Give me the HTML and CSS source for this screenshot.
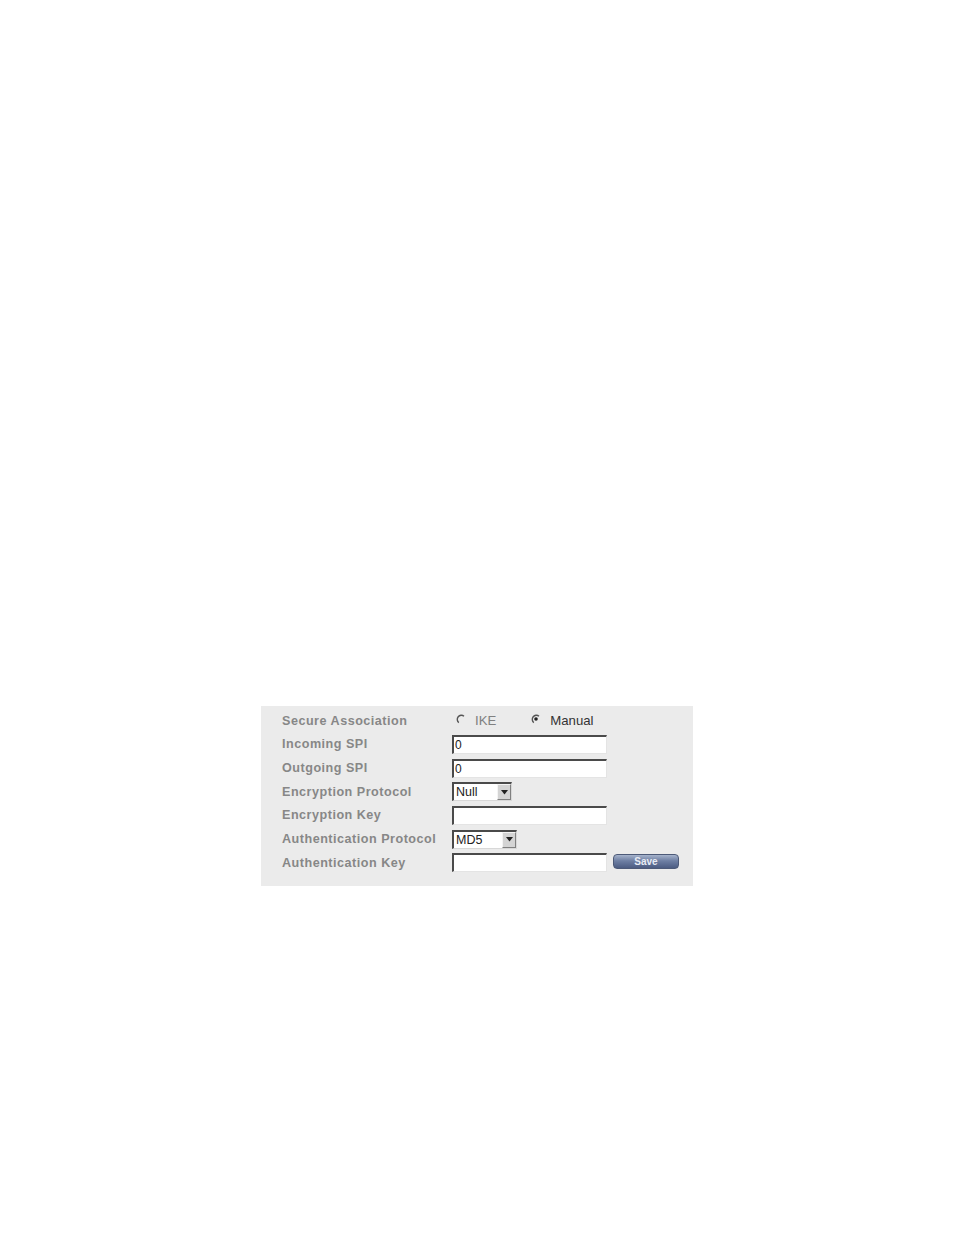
FILE: index.html
```html
<!DOCTYPE html>
<html>
<head>
<meta charset="utf-8">
<link rel="stylesheet" href="styles.css">
</head>
<body>
<div class="page">
  <div class="panel">
    <div class="label">Secure Association</div>
    <div class="field radios">
      <span class="radio"><svg width="10" height="10" viewBox="0 0 10 10"><path d="M8 2.2 A4 4 0 1 0 2.8 8.6" fill="none" stroke="#555" stroke-width="1.4"/></svg><span class="rtext dim">IKE</span></span>
      <span class="radio r2"><svg width="10" height="10" viewBox="0 0 10 10"><path d="M8 2.2 A4 4 0 1 0 2.8 8.6" fill="none" stroke="#555" stroke-width="1.4"/><circle cx="5" cy="5" r="1.8" fill="#222"/></svg><span class="rtext">Manual</span></span>
    </div>

    <div class="label">Incoming SPI</div>
    <div class="field"><div class="input">0</div></div>

    <div class="label">Outgoing SPI</div>
    <div class="field"><div class="input">0</div></div>

    <div class="label">Encryption Protocol</div>
    <div class="field"><div class="select s-null"><span class="stext">Null</span><span class="arrow"><svg width="7" height="5" viewBox="0 0 7 5"><path d="M0 0H7L3.5 4.5Z" fill="#222"/></svg></span></div></div>

    <div class="label">Encryption Key</div>
    <div class="field"><div class="input"></div></div>

    <div class="label">Authentication Protocol</div>
    <div class="field"><div class="select s-md5"><span class="stext">MD5</span><span class="arrow"><svg width="7" height="5" viewBox="0 0 7 5"><path d="M0 0H7L3.5 4.5Z" fill="#222"/></svg></span></div></div>

    <div class="label">Authentication Key</div>
    <div class="field"><div class="input"></div><button class="save">Save</button></div>
  </div>
</div>
</body>
</html>
```

FILE: styles.css
```css
html, body {
  margin: 0;
  padding: 0;
  background: #ffffff;
}
.page {
  width: 954px;
  height: 1235px;
  padding-top: 706px;
  padding-left: 261px;
  box-sizing: border-box;
}
.panel {
  width: 432px;
  height: 180px;
  box-sizing: border-box;
  background: #ebebeb;
  padding: 3px 0 0 21px;
  display: grid;
  grid-template-columns: 170px 1fr;
  grid-auto-rows: 23.67px;
  font-family: "Liberation Sans", Arial, sans-serif;
}
.label {
  display: flex;
  align-items: center;
  font-size: 12.6px;
  font-weight: bold;
  letter-spacing: 0.5px;
  color: #878787;
  white-space: nowrap;
}
.field {
  display: flex;
  align-items: center;
}
.radios {
  padding-left: 4px;
}
.radio {
  display: flex;
  align-items: center;
  font-size: 13.2px;
  color: #333;
}
.radio svg {
  display: block;
  margin-top: -3px;
}
.rtext {
  margin-left: 9px;
}
.rtext.dim {
  color: #808080;
}
.r2 {
  margin-left: 35px;
}
.input {
  width: 155px;
  height: 19px;
  box-sizing: border-box;
  background: #ffffff;
  border-top: 2px solid #4a4a4a;
  border-left: 2px solid #4a4a4a;
  border-right: 1px solid #e4e4e4;
  border-bottom: 1px solid #e4e4e4;
  font-size: 12px;
  line-height: 16px;
  color: #222;
  padding-left: 1px;
}
.select {
  height: 19px;
  box-sizing: border-box;
  background: #ffffff;
  border-top: 2px solid #4a4a4a;
  border-left: 2px solid #4a4a4a;
  border-right: 1px solid #d8d8d8;
  border-bottom: 1px solid #d8d8d8;
  display: flex;
  align-items: stretch;
  justify-content: space-between;
  font-size: 12.5px;
  color: #222;
}
.s-null { width: 60px; }
.s-md5 { width: 65px; }
.stext {
  line-height: 16px;
  padding-left: 2px;
}
.arrow {
  width: 14px;
  background: #d4d4d4;
  border-left: 1px solid #f4f4f4;
  border-top: 1px solid #f4f4f4;
  border-right: 1px solid #808080;
  border-bottom: 1px solid #808080;
  box-sizing: border-box;
  display: flex;
  align-items: center;
  justify-content: center;
}
.arrow svg { display: block; }
.save {
  margin-left: 6px;
  margin-top: -3px;
  width: 66px;
  height: 15px;
  padding: 0;
  border: 1px solid #4d5a78;
  border-radius: 4px;
  background: linear-gradient(#a6b3cc, #6e7fa3 45%, #4c5c82);
  color: #e8ecf5;
  font-family: "Liberation Sans", Arial, sans-serif;
  font-size: 10px;
  font-weight: bold;
  line-height: 13px;
}
```
